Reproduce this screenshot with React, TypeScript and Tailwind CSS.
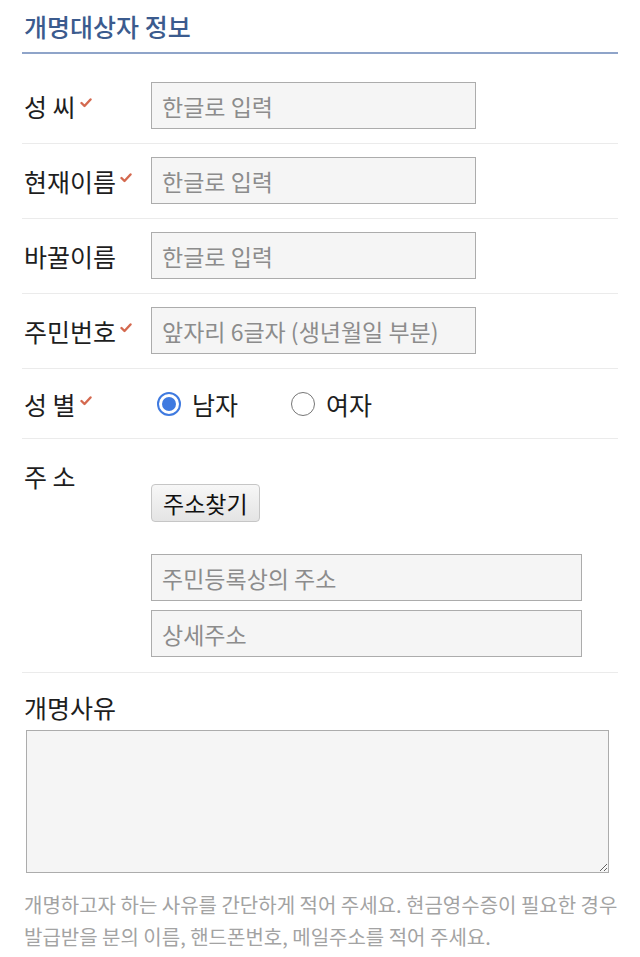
import React from "react";

const font = { fontFamily: '"Noto Sans CJK KR", "Noto Sans", sans-serif' };

function Check() {
  return (
    <svg viewBox="0 0 12 10" className="ml-[4px] -mt-[6px] h-[10px] w-[12px]">
      <path d="M1.5 5 L4.5 8 L10.5 1.5" fill="none" stroke="#d4694f" strokeWidth="2.4" strokeLinecap="round" strokeLinejoin="round" />
    </svg>
  );
}

function Label({ text, required }: { text: string; required?: boolean }) {
  return (
    <div className="flex w-[129px] shrink-0 items-center pl-[2px] text-[25px] leading-[34px] text-[#1e1e1e]">
      <span>{text}</span>
      {required && <Check />}
    </div>
  );
}

function TextInput({ placeholder, wide }: { placeholder: string; wide?: boolean }) {
  return (
    <input
      type="text"
      placeholder={placeholder}
      className={
        (wide ? "w-[431px] " : "w-[325px] ") +
        "h-[47px] border-[1.5px] border-[#acacac] bg-[#f5f5f5] px-[10px] text-[23px] text-[#222] outline-none placeholder:text-[#8c8c8c]"
      }
    />
  );
}

function Radio({ checked, label }: { checked?: boolean; label: string }) {
  return (
    <label className="flex items-center">
      {checked ? (
        <span className="flex h-[24px] w-[24px] items-center justify-center rounded-full border-[2px] border-[#3f7ae0] bg-white">
          <span className="h-[14px] w-[14px] rounded-full bg-[#3f7ae0]" />
        </span>
      ) : (
        <span className="h-[24px] w-[24px] rounded-full border-[1.5px] border-[#767676] bg-white" />
      )}
      <span className="ml-[11px] text-[25px] leading-[34px] text-[#1e1e1e]">{label}</span>
    </label>
  );
}

export default function App() {
  return (
    <div className="min-h-[957px] bg-white px-[22px]" style={font}>
      {/* 제목 */}
      <div className="pt-[8px] pb-[8px] pl-[2px]">
        <h2 className="text-[25px] font-medium leading-[36px] text-[#3b5b8e]">개명대상자 정보</h2>
      </div>
      <div className="h-[2px] bg-[#8fa4c9]" />

      {/* 성 씨 */}
      <div className="flex items-center border-b border-[#ebebeb] pt-[28px] pb-[14px]">
        <Label text="성 씨" required />
        <TextInput placeholder="한글로 입력" />
      </div>

      {/* 현재이름 */}
      <div className="flex items-center border-b border-[#ebebeb] pt-[13px] pb-[14px]">
        <Label text="현재이름" required />
        <TextInput placeholder="한글로 입력" />
      </div>

      {/* 바꿀이름 */}
      <div className="flex items-center border-b border-[#ebebeb] pt-[13px] pb-[14px]">
        <Label text="바꿀이름" />
        <TextInput placeholder="한글로 입력" />
      </div>

      {/* 주민번호 */}
      <div className="flex items-center border-b border-[#ebebeb] pt-[13px] pb-[14px]">
        <Label text="주민번호" required />
        <TextInput placeholder="앞자리 6글자 (생년월일 부분)" />
      </div>

      {/* 성 별 */}
      <div className="flex h-[70px] items-center border-b border-[#ebebeb]">
        <Label text="성 별" required />
        <div className="flex items-center gap-[53px] pl-[6px]">
          <Radio checked label="남자" />
          <Radio label="여자" />
        </div>
      </div>

      {/* 주 소 */}
      <div className="flex items-start border-b border-[#ebebeb] pt-[20px] pb-[15px]">
        <Label text="주 소" />
        <div className="flex flex-col items-start">
          <button
            type="button"
            className="mt-[25px] h-[38px] rounded-[4px] border border-[#c6c6c6] bg-gradient-to-b from-[#f7f7f7] to-[#e4e4e4] px-[11px] text-[23px] leading-none text-[#111]"
          >
            주소찾기
          </button>
          <div className="mt-[32px]">
            <TextInput placeholder="주민등록상의 주소" wide />
          </div>
          <div className="mt-[9px]">
            <TextInput placeholder="상세주소" wide />
          </div>
        </div>
      </div>

      {/* 개명사유 */}
      <div className="pt-[17px]">
        <div className="pl-[2px] text-[25px] leading-[34px] text-[#1e1e1e]">개명사유</div>
        <textarea className="mt-[6px] ml-[4px] block h-[143px] w-[583px] border-[1.5px] border-[#acacac] bg-[#f5f5f5] outline-none" />
        <p className="mt-[16px] break-keep pl-[2px] text-[20px] leading-[32px] text-[#a3a3a3]">
          개명하고자 하는 사유를 간단하게 적어 주세요. 현금영수증이 필요한 경우 발급받을 분의 이름, 핸드폰번호, 메일주소를 적어 주세요.
        </p>
      </div>
    </div>
  );
}
